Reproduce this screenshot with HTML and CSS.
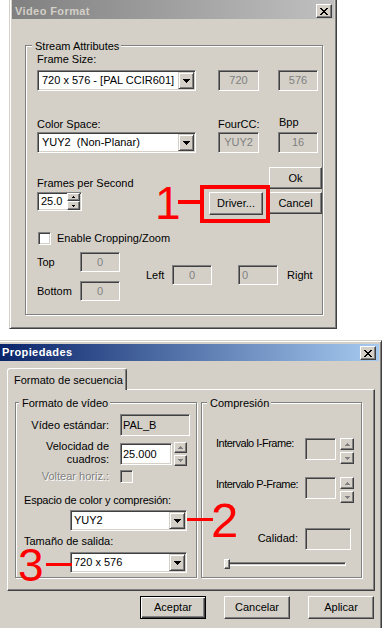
FILE: index.html
```html
<!DOCTYPE html>
<html lang="en">
<head>
<meta charset="UTF-8">
<meta name="viewport" content="width=device-width, initial-scale=1.0">
<title>Video Format</title>
<link rel="stylesheet" href="styles.css">
</head>
<body>
<div class="page">

<!-- Video Format dialog -->
<div class="window window-top">
  <div class="titlebar titlebar-inactive">
    <span class="title">Video Format</span>
    <span class="close-btn"><svg width="8" height="7" viewBox="0 0 8 7"><path d="M0 0h2v1H0z M6 0h2v1H6z M1 1h2v1H1z M5 1h2v1H5z M2 2h4v1H2z M3 3h2v1H3z M2 4h4v1H2z M1 5h2v1H1z M5 5h2v1H5z M0 6h2v1H0z M6 6h2v1H6z" fill="#000"/></svg></span>
  </div>
  <div class="client client-top">
    <div class="group group-stream">
      <span class="group-label label-stream">Stream Attributes</span>

      <div class="label">Frame Size:</div>
      <div class="row row-frame">
        <div class="combo combo-wide">
          <span class="combo-text">720 x 576 - [PAL CCIR601]</span>
          <span class="drop-btn"><svg width="7" height="4" viewBox="0 0 7 4"><path d="M0 0h7v1H0z M1 1h5v1H1z M2 2h3v1H2z M3 3h1v1H3z" fill="#000"/></svg></span>
        </div>
        <div class="field field-disabled fld-a">720</div>
        <div class="field field-disabled fld-b">576</div>
      </div>

      <div class="row row-labels">
        <div class="label lbl-color">Color Space:</div>
        <div class="label lbl-fourcc">FourCC:</div>
        <div class="label lbl-bpp">Bpp</div>
      </div>
      <div class="row row-color">
        <div class="combo combo-wide">
          <span class="combo-text">YUY2&nbsp; (Non-Planar)</span>
          <span class="drop-btn"><svg width="7" height="4" viewBox="0 0 7 4"><path d="M0 0h7v1H0z M1 1h5v1H1z M2 2h3v1H2z M3 3h1v1H3z" fill="#000"/></svg></span>
        </div>
        <div class="field field-disabled fld-a">YUY2</div>
        <div class="field field-disabled fld-b">16</div>
      </div>

      <div class="row row-fps">
        <div class="fps-col">
          <div class="label">Frames per Second</div>
          <div class="spin-field">
            <span class="spin-text">25.0</span>
            <span class="spin-btns">
              <span class="btn spin-up"><svg width="3" height="2" viewBox="0 0 3 2"><path d="M1 0h1v1H1z M0 1h3v1H0z" fill="#000"/></svg></span>
              <span class="btn spin-down"><svg width="3" height="2" viewBox="0 0 3 2"><path d="M0 0h3v1H0z M1 1h1v1H1z" fill="#000"/></svg></span>
            </span>
          </div>
        </div>
        <div class="btn btn-driver">Driver...</div>
        <div class="btn-col">
          <div class="btn btn-side">Ok</div>
          <div class="btn btn-side">Cancel</div>
        </div>
      </div>

      <div class="row row-check">
        <span class="checkbox"></span>
        <span class="label check-label">Enable Cropping/Zoom</span>
      </div>

      <div class="row row-crop">
        <div class="crop-col">
          <div class="crop-row"><span class="label crop-lbl">Top</span><span class="field field-disabled crop-fld">0</span></div>
          <div class="crop-row"><span class="label crop-lbl">Bottom</span><span class="field field-disabled crop-fld">0</span></div>
        </div>
        <div class="crop-side">
          <span class="label lbl-left">Left</span>
          <span class="field field-disabled crop-fld">0</span>
          <span class="field field-disabled crop-fld crop-fld-right">0</span>
          <span class="label lbl-right">Right</span>
        </div>
      </div>
    </div>
  </div>
</div>

<!-- Propiedades dialog -->
<div class="window window-bottom">
  <div class="titlebar titlebar-active">
    <span class="title">Propiedades</span>
    <span class="close-btn"><svg width="8" height="7" viewBox="0 0 8 7"><path d="M0 0h2v1H0z M6 0h2v1H6z M1 1h2v1H1z M5 1h2v1H5z M2 2h4v1H2z M3 3h2v1H3z M2 4h4v1H2z M1 5h2v1H1z M5 5h2v1H5z M0 6h2v1H0z M6 6h2v1H6z" fill="#000"/></svg></span>
  </div>
  <div class="client">
    <div class="tabs">
      <div class="tab">Formato de secuencia</div>
    </div>
    <div class="tab-panel">

      <div class="group group-video">
        <span class="group-label label-video">Formato de vídeo</span>
        <div class="prop-row row-std">
          <span class="prop-label">Vídeo estándar:</span>
          <span class="field field-ro fld-std">PAL_B</span>
        </div>
        <div class="prop-row row-rate">
          <span class="prop-label rate-label">Velocidad de<br>cuadros:</span>
          <span class="field field-white fld-rate">25.000</span>
          <span class="spin-pair spin-pair-rate">
            <span class="btn"><svg width="5" height="3" viewBox="0 0 5 3"><path d="M2 0h1v1H2z M1 1h3v1H1z M0 2h5v1H0z" fill="#808080"/></svg></span>
            <span class="btn"><svg width="5" height="3" viewBox="0 0 5 3"><path d="M0 0h5v1H0z M1 1h3v1H1z M2 2h1v1H2z" fill="#808080"/></svg></span>
          </span>
        </div>
        <div class="prop-row row-flip">
          <span class="prop-label label-disabled">Voltear horiz.:</span>
          <span class="checkbox checkbox-disabled"></span>
        </div>
        <div class="label lbl-space">Espacio de color y compresión:</div>
        <div class="combo combo-prop combo-space">
          <span class="combo-text">YUY2</span>
          <span class="drop-btn"><svg width="7" height="4" viewBox="0 0 7 4"><path d="M0 0h7v1H0z M1 1h5v1H1z M2 2h3v1H2z M3 3h1v1H3z" fill="#000"/></svg></span>
        </div>
        <div class="label lbl-size">Tamaño de salida:</div>
        <div class="combo combo-prop combo-size">
          <span class="combo-text">720 x 576</span>
          <span class="drop-btn"><svg width="7" height="4" viewBox="0 0 7 4"><path d="M0 0h7v1H0z M1 1h5v1H1z M2 2h3v1H2z M3 3h1v1H3z" fill="#000"/></svg></span>
        </div>
      </div>

      <div class="group group-comp">
        <span class="group-label label-comp">Compresión</span>
        <div class="comp-row">
          <span class="comp-label lbl-i">Intervalo I-Frame:</span>
          <span class="field field-ro comp-fld"></span>
          <span class="spin-pair spin-pair-comp">
            <span class="btn"><svg width="5" height="3" viewBox="0 0 5 3"><path d="M2 0h1v1H2z M1 1h3v1H1z M0 2h5v1H0z" fill="#808080"/></svg></span>
            <span class="btn"><svg width="5" height="3" viewBox="0 0 5 3"><path d="M0 0h5v1H0z M1 1h3v1H1z M2 2h1v1H2z" fill="#808080"/></svg></span>
          </span>
        </div>
        <div class="comp-row row-p">
          <span class="comp-label lbl-p">Intervalo P-Frame:</span>
          <span class="field field-ro comp-fld"></span>
          <span class="spin-pair spin-pair-comp">
            <span class="btn"><svg width="5" height="3" viewBox="0 0 5 3"><path d="M2 0h1v1H2z M1 1h3v1H1z M0 2h5v1H0z" fill="#808080"/></svg></span>
            <span class="btn"><svg width="5" height="3" viewBox="0 0 5 3"><path d="M0 0h5v1H0z M1 1h3v1H1z M2 2h1v1H2z" fill="#808080"/></svg></span>
          </span>
        </div>
        <div class="comp-row row-q">
          <span class="comp-label lbl-q">Calidad:</span>
          <span class="field field-ro comp-fld-q"></span>
        </div>
        <div class="slider">
          <span class="slider-thumb"></span>
          <span class="slider-track"></span>
        </div>
      </div>

    </div>
    <div class="dialog-buttons">
      <div class="btn btn-dlg btn-default">Aceptar</div>
      <div class="btn btn-dlg">Cancelar</div>
      <div class="btn btn-dlg">Aplicar</div>
    </div>
  </div>
</div>

<!-- red callouts drawn over the screenshot -->
<span class="note note-1">1</span>
<span class="note-line note-line-1"></span>
<span class="note-box"></span>
<span class="note-line note-line-2"></span>
<span class="note note-2">2</span>
<span class="note note-3">3</span>
<span class="note-line note-line-3"></span>

</div>
</body>
</html>
```

FILE: styles.css
```css
body {
  margin: 0;
  background: #fff;
  font-family: "Liberation Sans", Arial, sans-serif;
  font-size: 11px;
  line-height: 13px;
  color: #000;
}
.page {
  position: relative;
  width: 382px;
  height: 628px;
  overflow: hidden;
}

/* window frame */
.window {
  box-sizing: border-box;
  background: #d4d0c8;
  border: 1px solid;
  border-color: #d4d0c8 #404040 #404040 #d4d0c8;
  box-shadow: inset 1px 1px #fff, inset -1px -1px #808080;
  padding: 2px;
}
.window-top {
  margin: -3px 0 0 9px;
  width: 328px;
  height: 332px;
}
.window-bottom {
  margin: 11px 0 0 -3px;
  width: 385px;
  height: 290px;
}

.titlebar {
  display: flex;
  height: 19px;
}
.titlebar-inactive {
  background: linear-gradient(to right, #808080, #c0c0c0);
  color: #d4d0c8;
}
.titlebar-active {
  height: 17px;
  margin-top: 1px;
  background: linear-gradient(to right, #0a246a, #a6caf0);
  color: #fff;
}
.title {
  font-weight: bold;
  letter-spacing: 0.4px;
}
.titlebar-inactive .title {
  padding: 3px 0 0 3px;
  line-height: 16px;
}
.titlebar-active .title {
  padding-left: 2px;
  line-height: 17px;
}
.close-btn {
  box-sizing: border-box;
  width: 16px;
  height: 14px;
  display: flex;
  align-items: center;
  justify-content: center;
  background: #d4d0c8;
  border: 1px solid;
  border-color: #fff #404040 #404040 #fff;
  box-shadow: inset -1px -1px #808080;
}
.titlebar-inactive .close-btn {
  margin: 4px 2px 0 auto;
}
.titlebar-active .close-btn {
  margin: 2px 3px 0 auto;
}

/* common controls */
.btn {
  box-sizing: border-box;
  display: flex;
  align-items: center;
  justify-content: center;
  background: #d4d0c8;
  border: 1px solid;
  border-color: #fff #404040 #404040 #fff;
  box-shadow: inset -1px -1px #808080;
}
.field {
  box-sizing: border-box;
  display: flex;
  align-items: center;
  justify-content: center;
  border: 1px solid;
  border-color: #808080 #fff #fff #808080;
  box-shadow: inset 1px 1px #404040, inset -1px -1px #d4d0c8;
  background: #d4d0c8;
}
.field-disabled {
  color: #808080;
}
.field-ro,
.field-white {
  justify-content: flex-start;
  padding-left: 2px;
}
.field-white {
  background: #fff;
}
.combo {
  box-sizing: border-box;
  display: flex;
  align-items: center;
  padding: 1px;
  background: #fff;
  border: 1px solid;
  border-color: #808080 #fff #fff #808080;
  box-shadow: inset 1px 1px #404040, inset -1px -1px #d4d0c8;
}
.combo-text {
  padding-left: 3px;
}
.drop-btn {
  box-sizing: border-box;
  margin-left: auto;
  width: 16px;
  height: 100%;
  display: flex;
  align-items: center;
  justify-content: center;
  background: #d4d0c8;
  border: 1px solid;
  border-color: #d4d0c8 #404040 #404040 #d4d0c8;
  box-shadow: inset 1px 1px #fff, inset -1px -1px #808080;
}
.checkbox {
  box-sizing: border-box;
  width: 13px;
  height: 13px;
  background: #fff;
  border: 1px solid;
  border-color: #808080 #fff #fff #808080;
  box-shadow: inset 1px 1px #404040, inset -1px -1px #d4d0c8;
}
.checkbox-disabled {
  background: #d4d0c8;
}
.label-disabled {
  color: #808080;
  text-shadow: 1px 1px #fff;
}

/* group boxes */
.group {
  position: relative;
  box-sizing: border-box;
  border: 1px solid #808080;
  box-shadow: inset 1px 1px #fff, 1px 1px #fff;
}
.group-label {
  position: absolute;
  top: -6px;
  background: #d4d0c8;
  padding: 0 2px 0 3px;
}

/* Video Format */
.client-top {
  padding: 26px 0 0 13px;
}
.group-stream {
  width: 298px;
  height: 270px;
  padding: 7px 0 0 11px;
}
.label-stream {
  left: 6px;
}
.row {
  display: flex;
}
.row-frame {
  margin-top: 4px;
}
.combo-wide {
  width: 159px;
  height: 21px;
}
.fld-a {
  margin-left: 22px;
  width: 41px;
  height: 21px;
}
.fld-b {
  margin-left: 19px;
  width: 40px;
  height: 21px;
}
.row-labels {
  margin-top: 27px;
}
.lbl-color {
  width: 181px;
}
.lbl-fourcc {
  width: 61px;
}
.lbl-bpp {
  margin-top: -2px;
}
.row-color {
  margin-top: 1px;
}
.row-fps {
  margin-top: 14px;
  align-items: flex-start;
}
.fps-col {
  width: 172px;
  padding-top: 10px;
}
.spin-field {
  box-sizing: border-box;
  margin-top: 2px;
  width: 45px;
  height: 19px;
  display: flex;
  align-items: center;
  background: #fff;
  border: 1px solid;
  border-color: #808080 #fff #fff #808080;
  box-shadow: inset 1px 1px #404040, inset -1px -1px #d4d0c8;
}
.spin-text {
  padding-left: 3px;
}
.spin-btns {
  margin: 0 1px 0 auto;
  display: flex;
  flex-direction: column;
  height: 100%;
}
.spin-up {
  width: 13px;
  height: 8px;
}
.spin-down {
  width: 13px;
  height: 9px;
}
.btn-driver {
  margin-top: 25px;
  width: 54px;
  height: 23px;
}
.btn-col {
  margin-left: 6px;
  display: flex;
  flex-direction: column;
  gap: 3px;
}
.btn-side {
  width: 53px;
  height: 22px;
}
.row-check {
  margin-top: 17px;
  align-items: center;
}
.checkbox + .check-label {
  margin-left: 6px;
}
.row-check .checkbox {
  margin-left: 1px;
}
.row-crop {
  margin-top: 7px;
  align-items: flex-start;
}
.crop-col {
  display: flex;
  flex-direction: column;
  gap: 9px;
}
.crop-row {
  display: flex;
  align-items: center;
}
.crop-lbl {
  width: 43px;
}
.crop-fld {
  width: 40px;
  height: 20px;
}
.crop-fld-right {
  margin-left: 26px;
  justify-content: flex-start;
  padding-left: 3px;
}
.crop-side {
  margin: 13px 0 0 26px;
  display: flex;
  align-items: center;
}
.lbl-left {
  width: 26px;
}
.lbl-right {
  margin-left: 9px;
}

/* Propiedades */
.tabs {
  display: flex;
  margin-top: 7px;
  padding-left: 7px;
}
.tab {
  position: relative;
  z-index: 1;
  box-sizing: border-box;
  width: 120px;
  height: 22px;
  margin-bottom: -1px;
  padding: 5px 0 0 6px;
  background: #d4d0c8;
  border-top: 1px solid #fff;
  border-left: 1px solid #fff;
  border-right: 1px solid #404040;
  border-radius: 3px 3px 0 0;
  box-shadow: inset -1px 0 #808080;
}
.tab-panel {
  box-sizing: border-box;
  margin-left: 7px;
  width: 368px;
  height: 202px;
  padding: 12px 0 0 7px;
  display: flex;
  align-items: flex-start;
  gap: 4px;
  border: 1px solid;
  border-color: #fff #404040 #404040 #fff;
  box-shadow: inset -1px -1px #808080;
}
.group-video {
  width: 182px;
  height: 176px;
  padding-top: 11px;
}
.label-video {
  left: 3px;
}
.prop-row {
  display: flex;
}
.prop-label {
  width: 93px;
  margin-right: 11px;
  text-align: right;
}
.row-std {
  align-items: center;
}
.fld-std {
  width: 70px;
  height: 22px;
}
.row-rate {
  margin-top: 5px;
  align-items: flex-start;
}
.rate-label {
  margin-top: -1px;
}
.fld-rate {
  margin-top: 2px;
  width: 52px;
  height: 22px;
}
.spin-pair {
  display: flex;
  flex-direction: column;
  gap: 2px;
}
.spin-pair-rate {
  margin: 1px 0 0 2px;
}
.spin-pair-rate .btn {
  width: 13px;
  height: 11px;
}
.row-flip {
  margin-top: 4px;
  align-items: center;
}
.lbl-space {
  margin-top: 11px;
  padding-left: 8px;
  letter-spacing: -0.2px;
}
.combo-prop {
  margin-left: 54px;
  width: 117px;
  height: 21px;
}
.combo-prop .combo-text {
  padding-left: 2px;
}
.combo-space {
  margin-top: 3px;
}
.lbl-size {
  margin-top: 4px;
  padding-left: 8px;
}
.combo-size {
  margin-top: 4px;
}

.group-comp {
  width: 161px;
  height: 176px;
  padding: 35px 0 0 14px;
}
.label-comp {
  left: 5px;
}
.comp-row {
  display: flex;
  align-items: flex-start;
}
.comp-label {
  box-sizing: border-box;
  width: 89px;
  white-space: nowrap;
  letter-spacing: -0.5px;
}
.lbl-i {
  margin-top: -1px;
}
.lbl-p {
  margin-top: 1px;
}
.comp-fld {
  width: 31px;
  height: 22px;
}
.spin-pair-comp {
  margin-left: 4px;
}
.spin-pair-comp .btn {
  width: 14px;
  height: 12px;
}
.row-p {
  margin-top: 13px;
}
.row-q {
  margin-top: 25px;
}
.lbl-q {
  margin-top: 4px;
  padding-right: 7px;
  text-align: right;
  letter-spacing: 0;
}
.comp-fld-q {
  width: 46px;
  height: 22px;
}
.slider {
  margin: 9px 0 0 8px;
  display: flex;
  align-items: center;
  height: 10px;
}
.slider-thumb {
  position: relative;
  z-index: 1;
  box-sizing: border-box;
  width: 6px;
  height: 10px;
  background: #e8e6e0;
  border: 1px solid;
  border-color: #fff #404040 #404040 #fff;
  box-shadow: inset -1px -1px #808080;
}
.slider-track {
  box-sizing: border-box;
  margin-left: -4px;
  width: 120px;
  height: 4px;
  border: 1px solid;
  border-color: #808080 #fff #fff #808080;
  box-shadow: inset 1px 1px #404040;
}

.dialog-buttons {
  margin-top: 5px;
  padding-right: 5px;
  display: flex;
  justify-content: flex-end;
  gap: 18px;
}
.btn-dlg {
  width: 66px;
  height: 23px;
}
.btn-default {
  border: 1px solid #000;
  box-shadow: inset 1px 1px #fff, inset -1px -1px #404040, inset -2px -2px #808080;
}

/* red callouts, line box trimmed to the digit's ink */
.note {
  position: absolute;
  color: #f00;
}
.note-1 {
  left: 155px;
  top: 186px;
  font-size: 46px;
  line-height: 34px;
}
.note-2 {
  left: 211px;
  top: 502px;
  font-size: 49px;
  line-height: 36px;
}
.note-3 {
  left: 18px;
  top: 548px;
  font-size: 46px;
  line-height: 34px;
}
.note-line {
  position: absolute;
  background: #f00;
}
.note-line-1 {
  left: 178px;
  top: 200px;
  width: 23px;
  height: 4px;
}
.note-line-2 {
  left: 187px;
  top: 518px;
  width: 26px;
  height: 3px;
}
.note-line-3 {
  left: 46px;
  top: 563px;
  width: 26px;
  height: 3px;
}
.note-box {
  position: absolute;
  left: 200px;
  top: 185px;
  box-sizing: border-box;
  width: 70px;
  height: 38px;
  border: 4px solid #f00;
}
```
